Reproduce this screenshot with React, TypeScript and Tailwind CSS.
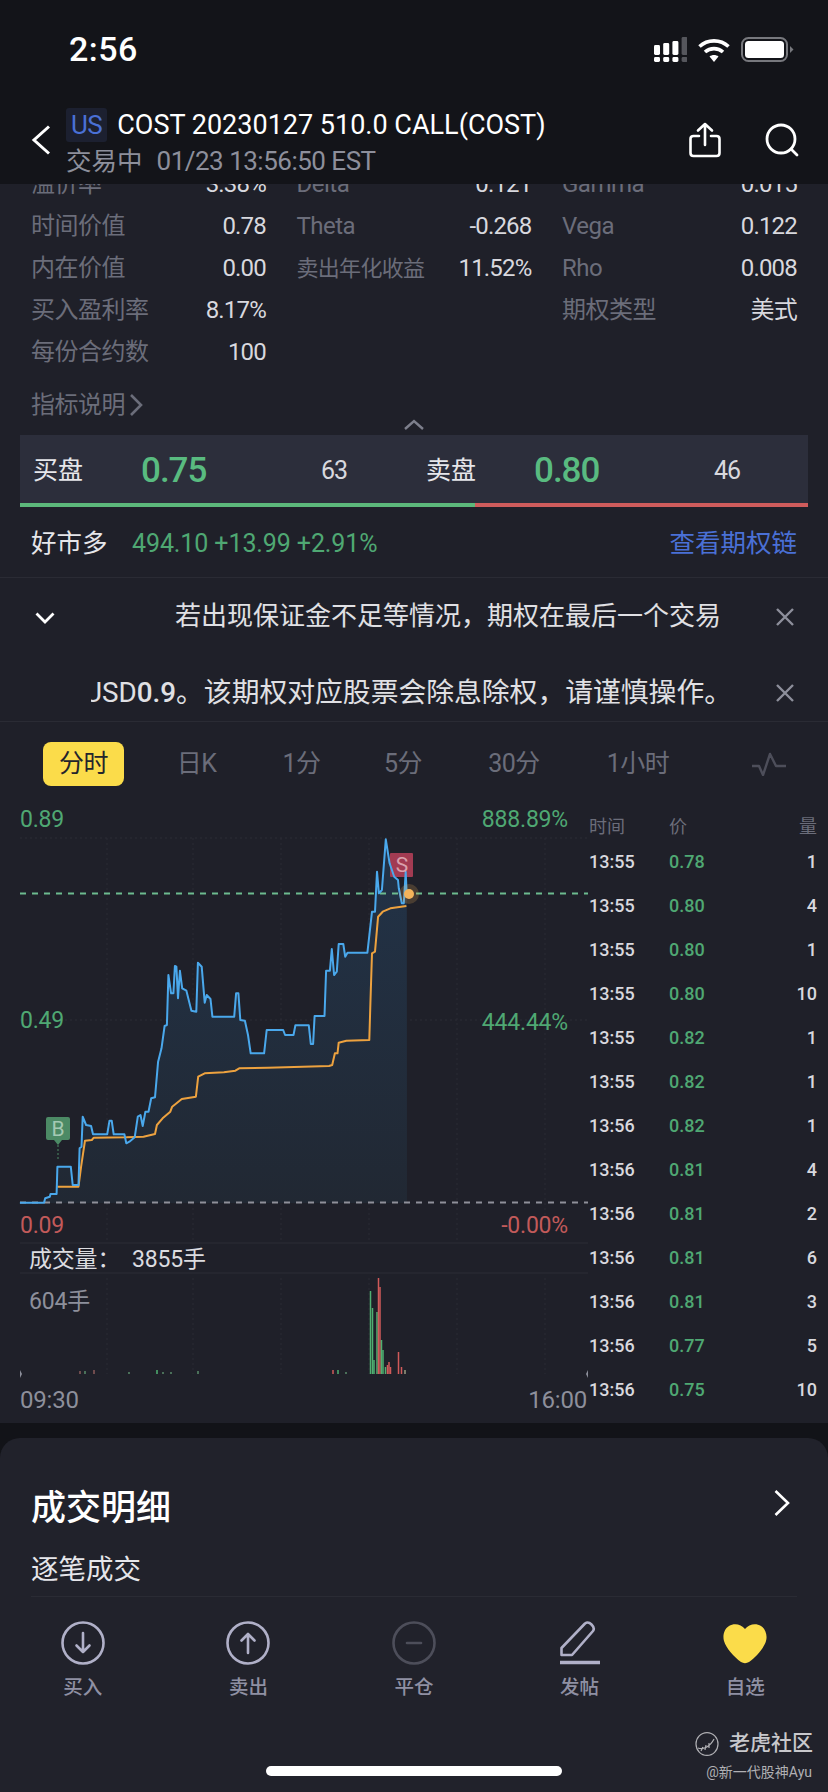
import React from "react";

type Pt = [number, number];

// chart points are read off a crop, so scale them back to page pixels
const scale = (pts: Pt[]) => pts.map(([x, y]) => `${(x / 2.613).toFixed(1)},${(y / 3).toFixed(1)}`).join(" ");

const bluePts: Pt[] = [
  [52, 1208], [115, 1208], [118, 1195], [130, 1190], [132, 1182], [148, 1182], [150, 1100], [185, 1100], [190, 1155], [205, 1155],
  [208, 1045], [213, 1040], [216, 950], [225, 975], [238, 978], [243, 1003], [280, 1003], [286, 962], [292, 962], [297, 1003],
  [325, 1003], [330, 1030], [338, 1025], [352, 1012], [360, 950], [367, 945], [373, 978], [380, 935], [388, 935], [395, 895],
  [405, 892], [413, 785], [422, 745], [430, 678], [436, 675], [440, 525], [447, 580], [453, 580], [457, 498], [461, 500],
  [465, 595], [470, 512], [476, 565], [487, 572], [500, 632], [513, 635], [517, 488], [527, 500], [535, 608], [540, 585],
  [550, 597], [555, 650], [612, 650], [617, 580], [623, 580], [628, 660], [640, 662], [648, 705], [655, 760], [690, 760],
  [697, 690], [740, 690], [745, 705], [767, 705], [772, 676], [807, 676], [812, 732], [818, 732], [822, 648], [848, 648],
  [852, 512], [862, 512], [867, 447], [873, 525], [880, 515], [885, 432], [897, 432], [902, 470], [908, 458], [960, 458],
  [972, 335], [980, 335], [985, 215], [990, 280], [998, 270], [1008, 118], [1018, 190], [1030, 230], [1040, 240], [1042, 265],
  [1050, 310], [1055, 310], [1060, 215], [1063, 290],
];

const orangePts: Pt[] = [
  [150, 1160], [205, 1160], [212, 1100], [222, 1022], [240, 1020], [245, 1013], [330, 1012], [375, 1010], [405, 1002], [410, 975],
  [425, 955], [445, 935], [450, 920], [475, 897], [512, 890], [518, 830], [535, 820], [585, 817], [615, 812], [625, 805],
  [700, 803], [860, 798], [868, 795], [875, 760], [882, 760], [885, 728], [905, 722], [965, 720], [968, 600], [972, 460],
  [980, 455], [988, 350], [1000, 335], [1020, 325], [1062, 318],
];

// [x, top y, colour] in page pixels, all bars stand on y=1374
const volBars: [number, number, string][] = [
  [370.5, 1291, "#4fb072"], [372.5, 1308, "#4fb072"], [374, 1360, "#4fb072"], [377, 1312, "#4fb072"], [378.5, 1278, "#d05a5a"],
  [380, 1287, "#d05a5a"], [381.5, 1340, "#4fb072"], [383, 1350, "#4fb072"], [385.5, 1367, "#4fb072"], [387.5, 1365, "#d05a5a"],
  [389, 1362, "#d05a5a"], [390.5, 1367, "#d05a5a"], [398.5, 1352, "#d05a5a"], [401.5, 1367, "#d05a5a"], [405, 1370, "#9a9a80"],
  [80, 1371, "#8a5a5a"], [85, 1371, "#5a8a6a"], [94, 1370, "#8a5a5a"], [129, 1372, "#5a8a6a"], [157, 1370, "#4fb072"],
  [163, 1372, "#5a8a6a"], [171, 1372, "#5a8a6a"], [198, 1371, "#5a8a6a"], [333, 1370, "#d05a5a"], [338, 1370, "#4fb072"], [346, 1372, "#5a8a6a"],
];

const details = [
  ["溢价率", "3.38%", "Delta", "0.121", "Gamma", "0.015"],
  ["时间价值", "0.78", "Theta", "-0.268", "Vega", "0.122"],
  ["内在价值", "0.00", "卖出年化收益", "11.52%", "Rho", "0.008"],
  ["买入盈利率", "8.17%", "", "", "期权类型", "美式"],
  ["每份合约数", "100", "", "", "", ""],
];

const trades = [
  ["13:55", "0.78", "1"], ["13:55", "0.80", "4"], ["13:55", "0.80", "1"], ["13:55", "0.80", "10"], ["13:55", "0.82", "1"],
  ["13:55", "0.82", "1"], ["13:56", "0.82", "1"], ["13:56", "0.81", "4"], ["13:56", "0.81", "2"], ["13:56", "0.81", "6"],
  ["13:56", "0.81", "3"], ["13:56", "0.77", "5"], ["13:56", "0.75", "10"],
];

function StatusIcons() {
  const tops = [8, 6, 4, 0];
  return (
    <div className="flex items-center gap-[11px]">
      <svg width="33" height="25" viewBox="0 0 33 25">
        {tops.map((top, i) => (
          <g key={i} fill={i === 3 ? "#55565c" : "#fff"}>
            <rect x={i * 9.2} y={top} width="6" height={18 - top} rx="1.4" />
            <rect x={i * 9.2} y="20" width="6" height="5" rx="1.4" />
          </g>
        ))}
      </svg>
      <svg width="32" height="24" viewBox="0 0 32 24" fill="none">
        <path d="M1.500 8.500C9.500 1 22.500 1 30.500 8.500" stroke="#fff" strokeWidth="3.600" />
        <path d="M7 14C12 9.500 20 9.500 25 14" stroke="#fff" strokeWidth="3.600" />
        <path d="M11.500 18.500C14 16.500 18 16.500 20.500 18.500L16 24Z" fill="#fff" />
      </svg>
      <svg width="53" height="25" viewBox="0 0 53 25" fill="none">
        <rect x="1" y="1" width="45" height="23" rx="6.500" stroke="#77787d" strokeWidth="2" />
        <rect x="4" y="4" width="39" height="17" rx="3.500" fill="#fff" />
        <path d="M49 9L52.500 12.500L49 16Z" fill="#77787d" />
      </svg>
    </div>
  );
}

function Chart() {
  const blue = scale(bluePts);
  return (
    <div className="relative h-[623px] w-[590px] shrink-0 tracking-[-0.2px]">
      <svg className="absolute left-0 top-0" width="590" height="623" viewBox="0 0 590 623" fill="none">
        <defs>
          <linearGradient id="area" x1="0" y1="0" x2="0" y2="1">
            <stop offset="0" stopColor="#223348" />
            <stop offset="1" stopColor="#212833" />
          </linearGradient>
        </defs>
        {[107, 193, 281, 369, 457, 545].map((x) => (
          <g key={x} stroke="#2a2b35" strokeDasharray="2 3">
            <line x1={x} y1="38" x2={x} y2="443" />
            <line x1={x} y1="478" x2={x} y2="574" />
          </g>
        ))}
        <line x1="20" y1="38" x2="588" y2="38" stroke="#2c2d37" strokeDasharray="2 3" />
        <line x1="20" y1="220" x2="588" y2="220" stroke="#2c2d37" strokeDasharray="2 3" />
        <line x1="20" y1="443" x2="588" y2="443" stroke="#2c2d37" />
        <line x1="20" y1="473" x2="588" y2="473" stroke="#2c2d37" />
        <polygon points={`${blue} 407,403 20,403`} fill="url(#area)" />
        <line x1="58" y1="345" x2="58" y2="360" stroke="#4c8a65" strokeDasharray="2 2" />
        <path d="M46 319a2 2 0 0 1 2-2h20a2 2 0 0 1 2 2v19a2 2 0 0 1-2 2h-6l-4 5l-4-5h-6a2 2 0 0 1-2-2z" fill="#4c8a65" />
        <rect x="390" y="53" width="23" height="24" rx="1" fill="#a23b52" />
        <line x1="20" y1="93.500" x2="588" y2="93.500" stroke="#6dbb8f" strokeWidth="2" strokeDasharray="6 6" />
        <line x1="20" y1="402.500" x2="588" y2="402.500" stroke="#8f909a" strokeWidth="2" strokeDasharray="6 6" />
        <polyline points={scale(orangePts)} stroke="#eda23f" strokeWidth="2" strokeLinejoin="round" />
        <polyline points={blue} stroke="#4aa8ec" strokeWidth="2" strokeLinejoin="round" />
        <circle cx="409" cy="94" r="10" fill="#f4b35a" fillOpacity="0.2" />
        <circle cx="409" cy="94" r="5" fill="#f4b35a" />
        {volBars.map(([x, top, color]) => (
          <rect key={`${x}-${top}`} x={x - 0.75} y={top - 800} width="1.500" height={1374 - top} fill={color} />
        ))}
        <path d="M20 570l2 4l-2 4zM588 570l-2 4l2 4z" fill="#8d8f9b" />
      </svg>
      <span className="absolute left-[50px] top-[316px] w-[16px] text-center text-[21px] leading-[26px] text-[#a5c9b3]">B</span>
      <span className="absolute left-[393px] top-[52px] w-[18px] text-center text-[21px] leading-[26px] text-[#d9a0ac]">S</span>
      <span className="absolute left-[20px] top-[5px] text-[23px] leading-[30px] text-[#4fa873]">0.89</span>
      <span className="absolute right-[22px] top-[5px] text-[23px] leading-[30px] text-[#4fa873]">888.89%</span>
      <span className="absolute left-[20px] top-[206px] text-[23px] leading-[30px] text-[#4fa873]">0.49</span>
      <span className="absolute right-[22px] top-[208px] text-[23px] leading-[30px] text-[#4fa873]">444.44%</span>
      <span className="absolute left-[20px] top-[411px] text-[23px] leading-[30px] text-[#c25a5a]">0.09</span>
      <span className="absolute right-[22px] top-[411px] text-[23px] leading-[30px] text-[#c25a5a]">-0.00%</span>
      <span className="absolute left-[29px] top-[445px] flex text-[23px] leading-[30px] text-[#dcdce0]">
        <span className="w-[103px]">成交量：</span>
        <span>3855手</span>
      </span>
      <span className="absolute left-[29px] top-[487px] text-[23px] leading-[30px] text-[#8d8f9b]">604手</span>
      <span className="absolute left-[20px] top-[585px] text-[24px] leading-[30px] text-[#8d8f9b]">09:30</span>
      <span className="absolute right-[3px] top-[585px] text-[24px] leading-[30px] text-[#8d8f9b]">16:00</span>
    </div>
  );
}

function TradeList() {
  return (
    <div className="-ml-[1px] flex-1 pr-[11px] pt-[13px]">
      <div className="flex h-[26px] items-center text-[18px] text-[#6b6d7a]">
        <span className="w-[80px]">时间</span>
        <span className="flex-1">价</span>
        <span>量</span>
      </div>
      {trades.map(([time, price, qty], i) => (
        <div key={i} className="flex h-[44px] items-center text-[18px] font-medium first:mt-[1px]">
          <span className="w-[80px] text-[#d8d8de]">{time}</span>
          <span className="flex-1 text-[#4fa873]">{price}</span>
          <span className="text-[#d8d8de]">{qty}</span>
        </div>
      ))}
    </div>
  );
}

function NavCircle({ dim, d }: { dim?: boolean; d: string }) {
  const color = dim ? "#4d4e5a" : "#b0b0c8";
  return (
    <svg width="44" height="44" viewBox="0 0 44 44" fill="none" stroke={color} strokeWidth="2.600" strokeLinecap="round" strokeLinejoin="round">
      <circle cx="22" cy="22" r="20.500" />
      <path d={d} />
    </svg>
  );
}

const navItems: { label: string; icon: React.ReactNode }[] = [
  { label: "买入", icon: <NavCircle d="M22 12V31M15.500 24.500L22 31L28.500 24.500" /> },
  { label: "卖出", icon: <NavCircle d="M22 32V13M15.500 19.500L22 13L28.500 19.500" /> },
  { label: "平仓", icon: <NavCircle dim d="M15 22H29" /> },
  {
    label: "发帖",
    icon: (
      <svg width="44" height="44" viewBox="0 0 44 44" fill="none" stroke="#b0b0c8" strokeWidth="2.600" strokeLinejoin="round">
        <path d="M3.500 27L27 2.500C29 1 31 1 33.500 3.500C36 6 36.500 8 35 10L14 34H3.500Z" />
        <path d="M2 41.500H42" strokeWidth="3.500" />
      </svg>
    ),
  },
  {
    label: "自选",
    icon: (
      <svg width="44" height="44" viewBox="0 0 44 44">
        <path d="M22 8C18 3 11 2 6 5C1 8 -0.500 15 1 20C3 27 11 36 18 41C20.500 42.500 23.500 42.500 26 41C33 36 41 27 43 20C44.500 15 43 8 38 5C33 2 26 3 22 8Z" fill="#fbdc4a" />
      </svg>
    ),
  },
];

const closeIcon = (
  <svg width="18" height="18" viewBox="0 0 18 18" fill="none" stroke="#8d8f9b" strokeWidth="2.400">
    <path d="M1 1L17 17M17 1L1 17" />
  </svg>
);

export default function App() {
  return (
    <div className="relative h-[1792px] w-[828px] overflow-hidden bg-[#1f2029] font-['Roboto','Noto_Sans_CJK_SC',sans-serif] text-[#d8d8de]">
      {/* header */}
      <div className="relative z-10 h-[184px] bg-[#131419]">
        <div className="flex h-[104px] items-center justify-between pb-[5px] pl-[69px] pr-[34px]">
          <span className="text-[34px] font-medium tracking-[0.5px] text-white">2:56</span>
          <StatusIcons />
        </div>
        <div className="flex h-[72px] items-center pl-[31px] pr-[29px]">
          <svg width="20" height="30" viewBox="0 0 20 30" fill="none" stroke="#fff" strokeWidth="3">
            <path d="M18 1.500L3 15L18 28.500" />
          </svg>
          <div className="ml-[15px] mt-[6px] flex-1">
            <div className="flex h-[36px] items-center">
              <span className="mr-[10px] rounded-[3px] bg-[#1c2030] px-[5px] text-[26px] leading-[34px] tracking-[-0.5px] text-[#4a70d6]">US</span>
              <span className="text-[27px] leading-[34px] text-white">COST 20230127 510.0 CALL(COST)</span>
            </div>
            <div className="flex h-[36px] items-center text-[#8d8f9b]">
              <span className="mr-[14px] text-[25.500px]">交易中</span>
              <span className="text-[26px] tracking-[-0.5px]">01/23 13:56:50 EST</span>
            </div>
          </div>
          <svg width="34" height="36" viewBox="0 0 34 36" fill="none" stroke="#fff" strokeWidth="2.600" strokeLinecap="round" strokeLinejoin="round">
            <path d="M17 23V2M10 8.500L17 2L24 8.500" />
            <path d="M11 14H5.500C3.500 14 2.500 15 2.500 17V31C2.500 33 3.500 34 5.500 34H28.500C30.500 34 31.500 33 31.500 31V17C31.500 15 30.500 14 28.500 14H23" />
          </svg>
          <svg className="ml-[43px]" width="34" height="34" viewBox="0 0 34 34" fill="none" stroke="#fff" strokeWidth="2.800" strokeLinecap="round">
            <circle cx="16" cy="16" r="14" />
            <path d="M26 26L32 32" />
          </svg>
        </div>
      </div>

      {/* option details, first row runs under the header */}
      <div className="-mt-[21px] grid grid-cols-3 gap-x-[30.500px] px-[31px]">
        {details.map((row) =>
          [0, 2, 4].map((c) => (
            <div key={row[c] + c + row[0]} className="flex h-[42px] items-center justify-between">
              <span className={row[c] === "卖出年化收益" ? "text-[22px] tracking-[-0.7px] text-[#6b6d7a]" : "text-[24px] tracking-[-0.5px] text-[#6b6d7a]"}>{row[c]}</span>
              <span className="text-[24px] tracking-[-0.8px] text-[#d8d8de]">{row[c + 1]}</span>
            </div>
          )),
        )}
      </div>

      <div className="mt-[18px] flex h-[28px] items-center gap-[4px] pl-[31px] text-[24px] tracking-[-0.5px] text-[#6b6d7a]">
        指标说明
        <svg width="14" height="24" viewBox="0 0 14 24" fill="none" stroke="#6b6d7a" strokeWidth="2.600">
          <path d="M2 2L12 12L2 22" />
        </svg>
      </div>

      <div className="flex h-[16px] justify-center">
        <svg width="20" height="11" viewBox="0 0 20 11" fill="none" stroke="#7d7f8c" strokeWidth="2.400">
          <path d="M1 10L10 2L19 10" />
        </svg>
      </div>

      {/* bid / ask */}
      <div className="mx-[20px]">
        <div className="flex h-[68px] items-center bg-[#2c2e3b] pl-[13px] pt-[4px]">
          {[["买盘", "0.75", "63"], ["卖盘", "0.80", "46"]].map(([label, price, qty]) => (
            <div key={label} className="flex w-[387px] shrink-0 items-center last:w-[388px] even:ml-[6px]">
              <span className="w-[108px] text-[25px] text-[#e6e6ea]">{label}</span>
              <span className="w-[180px] text-[35px] font-medium tracking-[-1px] text-[#59bb80]">{price}</span>
              <span className="text-[25px] tracking-[-1px] text-[#d8d8de]">{qty}</span>
            </div>
          ))}
        </div>
        <div className="flex h-[4px]">
          <div className="w-[455px] bg-[#5cb87b]" />
          <div className="flex-1 bg-[#cf5c5c]" />
        </div>
      </div>

      {/* underlying */}
      <div className="flex h-[71px] items-center border-b border-[#2a2b34] pl-[31px] pr-[31px] pt-[3px]">
        <span className="w-[101px] text-[25.500px] text-[#e6e6ea]">好市多</span>
        <span className="flex-1 text-[25px] tracking-[-0.1px] text-[#4fa873]">494.10 +13.99 +2.91%</span>
        <span className="text-[25.500px] text-[#4a70d6]">查看期权链</span>
      </div>

      {/* notice */}
      <div className="h-[144px] border-b border-[#2a2b34] pt-[1px] text-[#e0e0e4]">
        <div className="flex h-[75px] items-center">
          <svg className="ml-[35px] mt-[2px]" width="20" height="12" viewBox="0 0 20 12" fill="none" stroke="#fff" strokeWidth="2.800">
            <path d="M1.500 1.500L10 10L18.500 1.500" />
          </svg>
          <span className="ml-[120px] w-[601px] whitespace-nowrap text-[26px]">若出现保证金不足等情况，期权在最后一个交易</span>
          {closeIcon}
        </div>
        <div className="flex h-[68px] items-center pt-[9px]">
          <div className="ml-[91px] flex w-[685px] justify-end overflow-hidden pr-[44px]">
            <span className="whitespace-nowrap text-[27.800px]">USD<span className="font-medium">0.9</span>。该期权对应股票会除息除权，请谨慎操作。</span>
          </div>
          {closeIcon}
        </div>
      </div>

      {/* period tabs */}
      <div className="flex h-[78px] items-center pt-[5px] text-[25px] tracking-[-0.5px] text-[#6b6d7a]">
        <span className="ml-[43px] flex h-[44px] w-[81px] items-center justify-center rounded-[8px] bg-[#fbdc4a] text-[#23242c]">分时</span>
        <span className="ml-[20px] w-[105px] text-center">日K</span>
        <span className="w-[105px] text-center">1分</span>
        <span className="w-[98px] text-center">5分</span>
        <span className="w-[124px] text-center">30分</span>
        <span className="w-[124px] text-center">1小时</span>
        <svg className="ml-[52px]" width="34" height="24" viewBox="0 0 34 24" fill="none" stroke="#4d4e5a" strokeWidth="2.400" strokeLinejoin="round">
          <path d="M0 14H7L11 23L18 2L24 14H34" />
        </svg>
      </div>

      <div className="flex h-[623px]">
        <Chart />
        <TradeList />
      </div>

      <div className="h-[15px] bg-[#121318]" />

      {/* bottom sheet */}
      <div className="relative h-[354px] bg-[#121318]">
        <div className="h-full rounded-t-[20px] bg-[#21222b] px-[31px]">
          <div className="flex items-center justify-between pt-[44px]">
            <span className="pt-[4px] text-[35px] font-medium leading-[46px] text-white">成交明细</span>
            <svg className="-mt-[8px] mr-[7px]" width="16" height="26" viewBox="0 0 16 26" fill="none" stroke="#fff" strokeWidth="2.600">
              <path d="M1.500 1L14 13L1.500 25" />
            </svg>
          </div>
          <div className="mt-[20px] h-[36px] text-[27.500px] leading-[36px] text-[#e6e6ea]">逐笔成交</div>
          <div className="mt-[8px] border-t border-[#2a2b34]" />
        </div>
        <div className="absolute left-0 top-[183px] grid w-[828px] grid-cols-5">
          {navItems.map((n) => (
            <div key={n.label} className="flex flex-col items-center">
              {n.icon}
              <span className="mt-[9px] text-[19.500px] font-medium leading-[28px] text-[#8f90a3]">{n.label}</span>
            </div>
          ))}
        </div>
      </div>

      {/* watermark + home bar */}
      <div className="absolute left-[695px] top-[1730px] flex h-[28px] items-center gap-[10px] text-[21px] font-medium text-[#c8c8cc]">
        <svg width="24" height="24" viewBox="0 0 24 24" fill="none" stroke="#b0b0b4" strokeWidth="1.200">
          <ellipse cx="12" cy="12" rx="11" ry="11.400" />
          <path d="M3 16C8 18 15 15 19 7M6 19L8 15M10 18L11 13M14 16L14 11" />
        </svg>
        老虎社区
      </div>
      <span className="absolute right-[16px] top-[1762px] text-[14px] leading-[20px] text-[#b0b0b4]">@新一代股神Ayu</span>
      <div className="absolute left-[266px] top-[1766px] h-[10px] w-[296px] rounded-full bg-white" />
    </div>
  );
}
